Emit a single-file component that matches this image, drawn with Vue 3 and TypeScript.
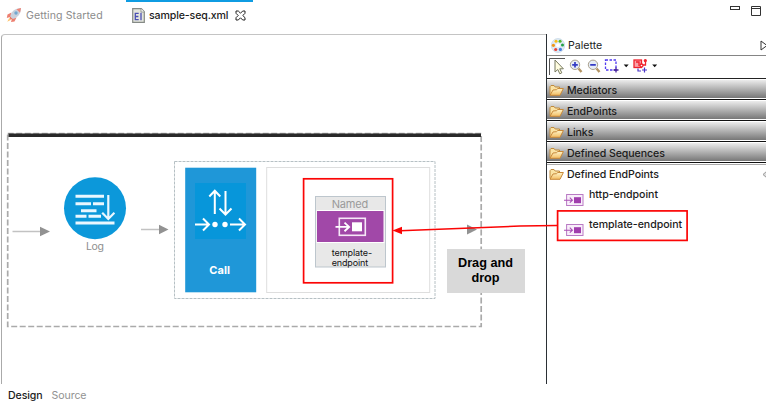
<script setup lang="ts">
const drawers: string[] = ['Mediators', 'EndPoints', 'Links', 'Defined Sequences']
const endpoints: string[] = ['http-endpoint', 'template-endpoint']
</script>

<template>
  <div class="editor">
    <svg class="defs" width="0" height="0" aria-hidden="true">
      <defs>
        <linearGradient id="folder" x1="0" y1="0" x2="0" y2="1">
          <stop offset="0" stop-color="#fff6cc" />
          <stop offset="1" stop-color="#f3bd62" />
        </linearGradient>
        <symbol id="folder-icon" viewBox="0 0 15 13">
          <path d="M1 10.500V2.700L2 1.500h3l1.200 1.500h4.300V5" fill="#fae3a4" stroke="#c08a3c" />
          <path d="M1 11.300 4 6l3.500-.3 1.300-1.200h5.600L11 11.300z" fill="url(#folder)" stroke="#c8893a" stroke-linejoin="round" />
        </symbol>
        <symbol id="endpoint-icon" viewBox="0 0 20 14">
          <rect x="2.600" y="1.500" width="16.400" height="11" fill="#f8eefa" stroke="#b97ac4" />
          <path d="M0 7.200h8M5.800 4.700l2.600 2.500-2.600 2.500" fill="none" stroke="#a94fb5" stroke-width="1.100" />
          <rect x="10" y="4.200" width="7" height="6" fill="#a03dad" />
        </symbol>
      </defs>
    </svg>

    <header class="tabs">
      <div class="tab">
        <svg class="rocket" width="16" height="16" viewBox="0 0 16 16">
          <path d="M5.500 5.500 1.500 7.400.8 11l4-1.200zM10.500 10.500l-2 4.100L5 15l1.200-4z" fill="#ed7f70" />
          <path d="M3.300 11 1.200 14.700 5.200 12.800z" fill="#ffc36b" />
          <path d="M4.200 9.600C5 4.500 9 1.200 15 1c0 5.800-3.400 9.900-8.400 11z" fill="#c9d1dc" />
          <path d="M10.500 2.200 15 1l-1 4.700z" fill="#ef8577" />
          <path d="m4.200 9.600 2.400 2.400-1.700.5-1.300-1.400z" fill="#e9705f" />
          <circle cx="10" cy="6" r="1.700" fill="#74a8cf" />
        </svg>
        <span>Getting Started</span>
      </div>
      <div class="tab active">
        <svg width="13" height="15" viewBox="0 0 13 15">
          <path d="M.7.7h8.600l3 3v10.600H.7z" fill="#e4e6dc" stroke="#858a86" stroke-width="1.200" />
          <path d="M9 .8v3.200h3.200" fill="#fff" stroke="#858a86" stroke-width=".8" />
          <path d="M6.700 5.300H3.300v6.400h3.400M3.300 8.500h3.100M9 4.700v7.600" fill="none" stroke="#4a4fb4" stroke-width="1.300" />
        </svg>
        <span>sample-seq.xml</span>
        <svg class="close" width="11" height="11" viewBox="0 0 11 11">
          <path d="M1 1h2.300l2.200 2.200L7.700 1H10v2.300L7.800 5.500 10 7.700V10H7.700L5.500 7.800 3.300 10H1V7.700l2.200-2.200L1 3.300z" fill="#fff" stroke="#222" />
        </svg>
      </div>
      <svg class="window-buttons" width="32" height="12" viewBox="0 0 32 12">
        <rect x=".500" y="1.500" width="9" height="3" fill="#fff" stroke="#333" />
        <path d="M21.500 1.500h9v9h-9zM21.500 3.500h9" fill="#fff" stroke="#333" />
      </svg>
    </header>

    <div class="workspace">
      <main class="canvas">
        <svg class="diagram" width="546" height="350" viewBox="0 33 546 350">
          <rect x="7.700" y="133.500" width="473.500" height="193" fill="none" stroke="#aaa" stroke-width="1.700" stroke-dasharray="6 2.500" />
          <rect x="8.500" y="133.500" width="472.500" height="3.500" fill="#292929" />
          <g stroke="#c2c2c2" stroke-width="1.500">
            <path d="M12.500 231.500H42M141 229.500h20M267 232.500h33" />
          </g>
          <g fill="#929292">
            <path d="m40 226.700 10 4.800-10 4.800zM159 224.700l9.500 4.800-9.500 4.800zM299.500 227.700l9.500 4.800-9.500 4.800zM467 224.600l10 4.900-10 4.900z" />
          </g>

          <circle cx="95" cy="208.200" r="31" fill="#0c98da" />
          <g stroke="#eaf7ff" stroke-width="2.900" fill="none">
            <path d="M75.500 196.300H104M75.500 203.700H91M93 203.700h11M81 210.700h15.500M75.500 216.300H86.500M88.500 216.300H101M75.500 223H114.500" />
            <path d="M108.300 195v23.500M102.200 212.800l6.100 6.200 6.100-6.200" stroke-width="2.200" />
          </g>
          <text class="caption" x="86" y="250" textLength="18">Log</text>

          <rect x="174.500" y="161.500" width="260.500" height="137" fill="none" stroke="#b6c0c4" stroke-dasharray="3 1" />
          <rect x="185.200" y="167.700" width="71" height="124.600" fill="#1f97d8" />
          <rect x="195" y="183" width="51" height="56" fill="#0796da" />
          <g fill="none" stroke="#fff" stroke-width="2">
            <path d="M214.800 214v-23M209.300 196.500l5.500-5.800 5.500 5.800M225.500 191v23M219.500 208.500l6 6 6-6" />
            <path d="M195 224.500h13M203 218.500l6 6-6 6M230 224.500h15M239 218.500l6 6-6 6" />
          </g>
          <g fill="#fff"><circle cx="215" cy="224.500" r="2.700" /><circle cx="225" cy="224.500" r="2.700" /></g>
          <text class="call" x="209.300" y="274" textLength="20.700">Call</text>

          <rect x="266.700" y="167.500" width="163" height="125" fill="#fff" stroke="#dedede" />
          <rect x="315.500" y="196.500" width="70" height="70.500" fill="#e8e8e8" stroke="#bdc6cd" />
          <rect x="316.500" y="210" width="68" height="33" fill="#fff" />
          <rect x="317" y="211" width="66.500" height="31" fill="#a148a8" />
          <g fill="none" stroke="#f6e8f7" stroke-width="1.600">
            <rect x="339.300" y="218.300" width="26" height="17" />
            <path d="M335.500 226.900h13M344.500 222.600l4.600 4.300-4.600 4.300" stroke="#fff" stroke-width="1.900" />
          </g>
          <rect x="352" y="222.300" width="10" height="9" fill="#fff" />
          <text class="named" x="331.700" y="208" textLength="36.500">Named</text>
          <text class="node-name" x="331.700" y="255.500" textLength="40.500">template-</text>
          <text class="node-name" x="331.700" y="266" textLength="36.500">endpoint</text>
        </svg>
      </main>

      <aside class="palette">
        <div class="palette-title">
          <svg width="14" height="15" viewBox="0 0 14 15">
            <ellipse cx="7" cy="7.500" rx="6.700" ry="7" fill="#dfeaf5" stroke="#bcd0e4" stroke-width=".6" />
            <circle cx="5" cy="3.200" r="1.500" fill="#f8bd12" /><circle cx="9.100" cy="3.200" r="1.500" fill="#51b52b" />
            <circle cx="2.400" cy="7.300" r="1.600" fill="#ef9718" /><circle cx="11.500" cy="7" r="1.500" fill="#229f46" />
            <circle cx="4.700" cy="11.500" r="1.600" fill="#e84338" /><circle cx="9.400" cy="11.400" r="1.600" fill="#477ddd" />
            <circle cx="7" cy="7.300" r="2" fill="#fff" />
          </svg>
          <span>Palette</span>
          <svg class="expand" width="6" height="11" viewBox="0 0 6 11"><path d="M1 1v9l6-4.500z" fill="#fff" stroke="#333" /></svg>
        </div>
        <div class="toolbar">
          <svg width="115" height="20" viewBox="548 58 115 20">
            <path d="M549.500 76V59.500H565" fill="none" stroke="#555" />
            <path d="M555 61v12l2.800-2.500 2 4.300 2-1-2-4h3.600z" fill="#fffde0" stroke="#777960" />
            <g stroke="#aaa18e" fill="#e6ecf5">
              <path d="m578.500 69.500 3 3.500M596.500 69.500l3 3.500" stroke-width="2.400" stroke="#b39463" />
              <circle cx="575" cy="65.800" r="4.700" /><circle cx="593" cy="65.800" r="4.700" />
            </g>
            <path d="M572.200 65.800h5.600M575 63v5.600M590.200 65.800h5.600" stroke="#343bc4" stroke-width="1.700" />
            <rect x="605.500" y="61" width="10.500" height="10" fill="none" stroke="#513bf0" stroke-width="1.300" stroke-dasharray="2.500 1.500" />
            <path d="M613.500 71h5M616 68.500v5" stroke="#442099" stroke-width="1.300" />
            <path d="M623.700 65.500h5l-2.500 2.800zM652.200 65.500h5l-2.500 2.800z" fill="#111" />
            <g fill="none" stroke="#f0222d" stroke-width="1.300">
              <rect x="634" y="61" width="7.500" height="7.500" fill="#f9a2a8" />
              <path d="M636 63h3v4M641 66h4.500v-5" /><circle cx="645.300" cy="61.600" r="1" /><circle cx="641.500" cy="66.500" r="1.500" fill="#fff" />
            </g>
            <path d="M638 69.500v2.500h3M642 71h5M644.500 68.500v5" stroke="#4a35c7" stroke-width="1.200" fill="none" />
          </svg>
        </div>
        <div v-for="name in drawers" :key="name" class="drawer">
          <svg width="15" height="13"><use href="#folder-icon" /></svg>
          <span>{{ name }}</span>
        </div>
        <div class="drawer open">
          <svg width="15" height="13"><use href="#folder-icon" /></svg>
          <span>Defined EndPoints</span>
          <svg class="pin" width="4" height="9" viewBox="0 0 4 9"><path d="M5 1 1 4.500 5 8" fill="#ddd" stroke="#999" /></svg>
        </div>
        <ul class="entries">
          <li v-for="name in endpoints" :key="name">
            <svg width="20" height="14"><use href="#endpoint-icon" /></svg>
            <span>{{ name }}</span>
          </li>
        </ul>
      </aside>
    </div>

    <footer class="views">
      <span class="selected">Design</span>
      <span>Source</span>
    </footer>

    <div class="callout">Drag and<br />drop</div>
    <svg class="annotation" width="766" height="415" viewBox="0 0 766 415">
      <g fill="none" stroke="#fb0505" stroke-width="1.700">
        <rect x="303.600" y="178.800" width="89" height="104" />
        <rect x="557.600" y="210.900" width="129.500" height="29.500" />
        <path d="M400 230.700 520 226.100 557 225.500" stroke-width="1.500" />
      </g>
      <path d="m392.500 230.500 9.500-3.800v7.600z" fill="#fb0505" />
    </svg>
  </div>
</template>

<style>
body { background: #fff; overflow: hidden; }
</style>

<style scoped>
.editor { position: relative; display: flex; flex-direction: column; width: 766px; height: 415px; overflow: hidden; background: #fff; font-family: Inter, "Liberation Sans", sans-serif; font-size: 10.600px; color: #1c1c1c; }
.defs, .annotation, .callout { position: absolute; }
svg { display: block; flex: none; }
.tabs { display: flex; height: 34px; box-sizing: border-box; flex: none; }
.tab { display: flex; align-items: center; gap: 4px; height: 31px; width: 126px; box-sizing: border-box; padding: 0 0 1px 6px; color: #8c8c8c; letter-spacing: .08px; }
.tab.active { width: 127px; border-top: 2px solid #0f9ce2; padding: 0 0 3px 6px; color: #1c1c1c; letter-spacing: -.13px; font-weight: 500; }
.close { margin-left: 3px; }
.window-buttons { margin: 5px 4px 0 auto; }
.workspace { display: flex; height: 350px; flex: none; }
.canvas { width: 545px; box-sizing: border-box; margin-left: 1px; border-left: 1px solid #aaa; border-top: 1px solid #c4c4c4; border-top-left-radius: 4px; overflow: hidden; }
.diagram { margin-left: -2px; margin-top: -2px; }
.caption { font-size: 10.500px; fill: #8e8e8e; }
.call { font-size: 11px; font-weight: 700; fill: #fff; }
.named { font-size: 11px; fill: #9a9a9a; }
.node-name { font-size: 9px; fill: #111; }
.palette { width: 220px; box-sizing: border-box; border-left: 1px solid #2b3035; }
.palette-title { display: flex; align-items: center; gap: 3px; height: 22px; box-sizing: border-box; padding: 1px 0 0 4px; border-bottom: 1px solid #858585; }
.expand { margin-left: auto; }
.toolbar { height: 23px; box-sizing: border-box; border-bottom: 1px solid #222; padding: 1px; }
.drawer { display: flex; align-items: center; gap: 3px; height: 21px; box-sizing: border-box; padding: 2px 0 0 2px; border-top: 1px solid #fff; border-bottom: 1px solid #111; background: linear-gradient(#ececec, #777 18px, #fff 18px); letter-spacing: -.08px; font-weight: 450; }
.drawer.open { background: #fff; border-bottom: 0; border-top: 1px solid #aaa; margin-top: 1px; height: 20px; padding-top: 0; }
.pin { margin-left: auto; }
.entries { list-style: none; margin: 0; padding: 0; font-weight: 450; }
.entries li { display: flex; gap: 5px; height: 30px; padding-left: 17px; box-sizing: border-box; }
.entries li svg { margin-top: 9px; }
.entries li span { margin-top: 4px; line-height: 13px; letter-spacing: -.04px; }
.views { display: flex; gap: 9px; padding: 5px 0 0 8px; color: #929292; letter-spacing: -.1px; }
.views .selected { color: #1c1c1c; font-weight: 500; }
.callout { left: 447px; top: 249px; width: 78px; height: 44px; box-sizing: border-box; padding: 7px 1px 0 0; background: #d9d9d9; color: #000; text-align: center; font: 700 12.700px/15px "Liberation Sans", Arial, sans-serif; }
.annotation { inset: 0; pointer-events: none; }
</style>
